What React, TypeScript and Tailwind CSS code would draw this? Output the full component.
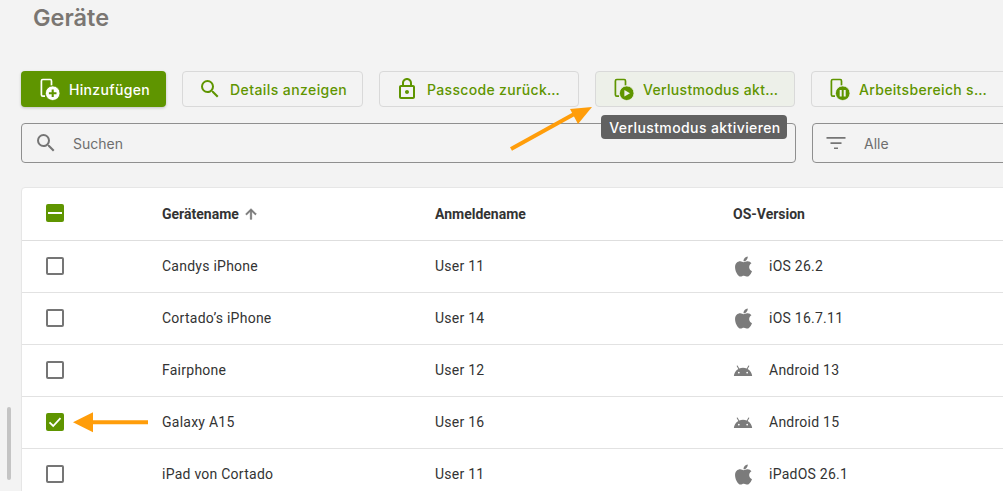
import React from "react";
import { FaApple } from "react-icons/fa";

const G = "#5f9500";

function DeviceIcon({ badge, fg, bg }: { badge: "plus" | "play" | "pause"; fg: string; bg: string }) {
  return (
    <svg width="24" height="24" viewBox="0 0 24 24" className="shrink-0" fill="none">
      <path d="M8 19.200H5.800C4.900 19.200 4.400 18.600 4.400 17.800V3.900C4.400 3 5 2.500 5.800 2.500H13.200C14 2.500 14.500 3 14.500 3.900V8.500" stroke={fg} strokeWidth="1.700" />
      <circle cx="15.700" cy="16.200" r="7.300" fill={fg} stroke={bg} strokeWidth="0.800" />
      {badge === "plus" && <path d="M15.700 12.400V20M11.900 16.200H19.500" stroke={bg} strokeWidth="2.100" />}
      {badge === "play" && <path d="M13.400 12.900V19.500L19 16.200Z" fill={bg} />}
      {badge === "pause" && <path d="M13.700 12.900V19.500M17.700 12.900V19.500" stroke={bg} strokeWidth="2" />}
    </svg>
  );
}

function SearchIcon({ color, size = 24 }: { color: string; size?: number }) {
  return (
    <svg width={size} height={size} viewBox="0 0 24 24" className="shrink-0" fill={color}>
      <path d="M15.500 14h-.79l-.28-.27A6.470 6.470 0 0 0 16 9.500 6.500 6.500 0 1 0 9.500 16c1.610 0 3.090-.59 4.230-1.570l.27.28v.79l5 4.990L20.490 19l-4.990-5zm-6 0C7.010 14 5 11.990 5 9.500S7.010 5 9.500 5 14 7.010 14 9.500 11.990 14 9.500 14z" />
    </svg>
  );
}

function LockIcon() {
  return (
    <svg width="24" height="24" viewBox="0 0 24 24" className="shrink-0" fill={G}>
      <path d="M18 8h-1V6c0-2.760-2.240-5-5-5S7 3.240 7 6v2H6c-1.100 0-2 .9-2 2v10c0 1.100.9 2 2 2h12c1.100 0 2-.9 2-2V10c0-1.100-.9-2-2-2zM9 6c0-1.660 1.340-3 3-3s3 1.340 3 3v2H9V6zm9 14H6V10h12v10zm-6-3c1.100 0 2-.9 2-2s-.9-2-2-2-2 .9-2 2 .9 2 2 2z" />
    </svg>
  );
}

function AndroidIcon() {
  return (
    <svg width="20" height="20" viewBox="0 0 24 24" className="shrink-0" fill="#7b7b7b">
      <path d="M1 18q.225-2.675 1.638-4.925T6.400 9.500L4.550 6.300q-.15-.225-.075-.475T4.800 5.450q.2-.125.45-.05t.4.3L7.500 8.900Q9.650 8 12 8t4.500.9l1.850-3.200q.15-.225.4-.3t.45.05q.25.125.325.375t-.075.475L17.600 9.500q2.350 1.325 3.763 3.575T23 18H1Zm6-3q.425 0 .713-.288T8 14q0-.425-.288-.713T7 13q-.425 0-.713.288T6 14q0 .425.288.713T7 15Zm10 0q.425 0 .713-.288T18 14q0-.425-.288-.713T17 13q-.425 0-.713.288T16 14q0 .425.288.713T17 15Z" />
    </svg>
  );
}

function ActionButton({ icon, label, width, active, extra }: { icon: React.ReactNode; label: string; width: string; active?: boolean; extra: string }) {
  return (
    <button
      className={`${width} ${extra} ${active ? "bg-[#edf0e9]" : "bg-[#f3f3f3]"} h-9 shrink-0 flex items-center gap-2 pl-[15px] rounded border border-[#d9d9d9] text-[14px] font-medium text-[#5f9500] whitespace-nowrap`}
    >
      {icon}
      <span className="truncate">{label}</span>
    </button>
  );
}

function Check({ state }: { state: "none" | "some" | "all" }) {
  if (state === "none") {
    return <div className="w-[18px] h-[18px] rounded-[2px] border-2 border-[#757575] bg-white" />;
  }
  return (
    <div className="w-[18px] h-[18px] rounded-[2px] bg-[#5f9500] flex items-center justify-center">
      {state === "some" ? (
        <div className="w-[14px] h-[2px] bg-white" />
      ) : (
        <svg width="18" height="18" viewBox="0 0 18 18" fill="none">
          <path d="M3.500 9.300L7.200 13L14.500 5.200" stroke="white" strokeWidth="1.800" />
        </svg>
      )}
    </div>
  );
}

const rows = [
  { name: "Candys iPhone", user: "User 11", os: "iOS 26.2", apple: true, state: "none" as const },
  { name: "Cortado’s iPhone", user: "User 14", os: "iOS 16.7.11", apple: true, state: "none" as const },
  { name: "Fairphone", user: "User 12", os: "Android 13", apple: false, state: "none" as const },
  { name: "Galaxy A15", user: "User 16", os: "Android 15", apple: false, state: "all" as const },
  { name: "iPad von Cortado", user: "User 11", os: "iPadOS 26.1", apple: true, state: "none" as const },
];

export default function App() {
  return (
    <div className="relative w-[1003px] h-[491px] overflow-hidden bg-[#f3f3f3] font-['Inter',sans-serif]">
      <h1 className="pl-[33px] pt-[4px] h-[71px] text-[23.5px] leading-[28px] font-semibold text-[#7a7672]">Geräte</h1>

      <div className="flex gap-4 pl-[21px] w-[1100px]">
        <button className="w-[145px] h-9 shrink-0 flex items-center gap-2 pl-4 rounded bg-[#5f9500] text-white text-[14px] font-medium tracking-[0.33px] shadow-[0_1px_3px_rgba(0,0,0,0.2)]">
          <DeviceIcon badge="plus" fg="#ffffff" bg="#5f9500" />
          <span>Hinzufügen</span>
        </button>
        <ActionButton width="w-[181px]" extra="pr-[14px] tracking-[0.42px]" icon={<SearchIcon color={G} />} label="Details anzeigen" />
        <ActionButton width="w-[200px]" extra="pr-[14px] tracking-[0.33px]" icon={<LockIcon />} label="Passcode zurücksetzen" />
        <ActionButton width="w-[200px]" extra="pr-[14px] tracking-[0.33px]" active icon={<DeviceIcon badge="play" fg={G} bg="#edf0e9" />} label="Verlustmodus aktivieren" />
        <ActionButton width="w-[200px]" extra="pr-[22px] tracking-[0.33px]" icon={<DeviceIcon badge="pause" fg={G} bg="#f3f3f3" />} label="Arbeitsbereich sperren" />
      </div>

      <div className="flex gap-4 pl-[21px] w-[1200px] mt-4">
        <div className="w-[775px] h-10 shrink-0 flex items-center pl-3 rounded border border-[#8f8f8f] text-[14px] text-[#6e6e6e]">
          <SearchIcon color="#757575" />
          <span className="ml-[15px]">Suchen</span>
        </div>
        <div className="w-[300px] h-10 shrink-0 flex items-center pl-[11px] rounded border border-[#8f8f8f] text-[14px] text-[#6e6e6e]">
          <svg width="24" height="24" viewBox="0 0 24 24" className="shrink-0" fill="#757575">
            <path d="M2.500 6h19v1.700h-19zM6.500 11.200h11v1.700h-11zM10 16.400h4v1.700h-4z" />
          </svg>
          <span className="ml-[16px]">Alle</span>
        </div>
      </div>

      <div className="ml-[21px] mt-6 w-[1100px] bg-white rounded-t border border-[#e6e6e6] font-['Roboto',sans-serif] text-[14px] text-[#333333]">
        <div className="grid grid-cols-[140px_273px_298px_1fr] h-[53px] items-center border-b border-[#dedede] font-bold">
          <div className="pl-6 pb-[2px]"><Check state="some" /></div>
          <div className="flex items-center gap-1">
            <span>Gerätename</span>
            <svg width="16" height="16" viewBox="0 0 24 24" fill="#757575"><path d="M4 12l1.410 1.410L11 7.830V20h2V7.830l5.580 5.590L20 12l-8-8-8 8z" stroke="#757575" strokeWidth="1" /></svg>
          </div>
          <div>Anmeldename</div>
          <div>OS-Version</div>
        </div>
        {rows.map((r) => (
          <div key={r.name} className="grid grid-cols-[140px_273px_298px_1fr] h-[52px] items-center border-b border-[#e2e2e2] tracking-[0.25px]">
            <div className="pl-6 pb-[2px]"><Check state={r.state} /></div>
            <div>{r.name}</div>
            <div>{r.user}</div>
            <div className="flex items-center gap-4">
              <div className="w-5 h-5 flex items-center justify-center shrink-0">
                {r.apple ? <FaApple size={23} color="#7b7b7b" className="shrink-0" /> : <AndroidIcon />}
              </div>
              <span>{r.os}</span>
            </div>
          </div>
        ))}
      </div>

      <div className="absolute left-[7px] top-[407px] w-1 h-[73px] rounded bg-[#c4c4c4]" />

      <div className="absolute left-[601px] top-[115px] h-6 w-[186px] pl-[2px] flex items-center justify-center rounded bg-[#616161] text-white text-[14px] font-medium tracking-[0.4px] whitespace-nowrap">
        Verlustmodus aktivieren
      </div>

      <svg className="absolute left-0 top-0 pointer-events-none" width="1003" height="491" fill="none">
        <path d="M511 149L576 113" stroke="#ff9d0a" strokeWidth="4" />
        <path d="M592 107L570 109L578 124Z" fill="#ff9d0a" />
        <path d="M148 422.300H90" stroke="#ff9d0a" strokeWidth="4" />
        <path d="M73 422.300L93 412.300V432.300Z" fill="#ff9d0a" />
      </svg>
    </div>
  );
}
